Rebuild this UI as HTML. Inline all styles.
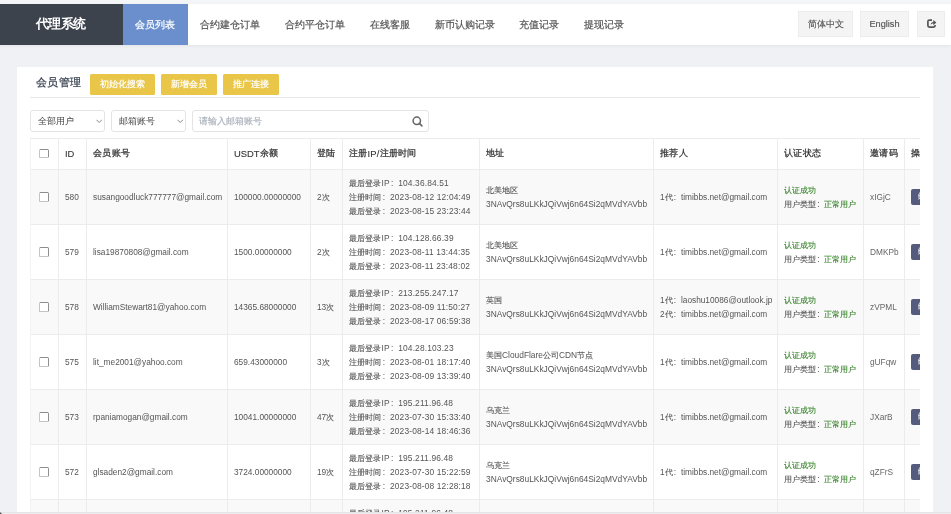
<!DOCTYPE html>
<html><head><meta charset="utf-8">
<style>
*{box-sizing:border-box;margin:0;padding:0}
html,body{width:951px;height:514px;overflow:hidden}
body{will-change:transform;background:#f0f1f5;font-family:"Liberation Sans",sans-serif;color:#555;position:relative}
.strip{position:absolute;left:0;top:0;width:951px;height:5px;background:#f4f5f7}
.nav{position:absolute;left:0;top:4px;width:951px;height:41px;background:#fff;box-shadow:0 1px 3px rgba(0,0,0,0.06)}
.logo{position:absolute;left:0;top:0;width:123px;height:41px;background:#3d434d;color:#fff;font-weight:bold;font-size:12.5px;line-height:41px;padding-left:36px;letter-spacing:-0.6px}
.menu{position:absolute;left:123px;top:0;height:41px;display:flex}
.menu div{height:41px;line-height:41px;padding:0 12.4px;font-size:10px;color:#555;white-space:nowrap;-webkit-text-stroke:0.2px currentColor}
.menu div.on{background:#6a8fcc;color:#fff}
.lb{position:absolute;top:7px;height:25.8px;background:#f4f4f4;border:1px solid #ececec;font-size:8.6px;line-height:24.5px;text-align:center;color:#555;-webkit-text-stroke:0.15px #555}
.card{position:absolute;left:17px;top:67px;width:916px;height:460px;background:#fff}
.title{position:absolute;left:19px;top:8px;font-size:11.3px;color:#3a4352;line-height:14px;letter-spacing:0.3px;-webkit-text-stroke:0.22px #3a4352}
.yb{position:absolute;top:7px;height:20.6px;background:#e9c648;color:#fff;font-size:9.3px;line-height:21.6px;border-radius:1.5px;text-align:center;white-space:nowrap;-webkit-text-stroke:0.2px #fff}
.hline{position:absolute;left:13px;top:30px;width:890px;height:1px;background:#e8e8e8}
.sel{position:absolute;top:43px;height:21.5px;border:1px solid #e4e4e4;border-radius:3px;font-size:9.3px;line-height:20.8px;color:#444;padding-left:7px}
.chev{position:absolute;top:8.3px}
.tw{position:absolute;left:30px;top:138px;width:890px;height:400px;overflow:hidden}
.tb{width:1010px;border-top:1px solid #ececec}
.r{display:flex;height:55px}
.r.h{height:31px}
.c{flex:none;border-right:1px solid #ececec;border-bottom:1px solid #ececec;padding-left:6px;display:flex;align-items:center;white-space:nowrap;overflow:hidden;font-size:8.3px;color:#555}
.c0{border-left:1px solid #ececec;width:29px!important}
.h .c{font-size:9.4px;color:#333;-webkit-text-stroke:0.1px #333}
.r.g .c{background:#f9f9f9}
.cb{display:inline-block;width:9.6px;height:9.4px;border:1px solid #c4c4c4;border-top-color:#8c8c8c;border-right-color:#909090;border-radius:1.5px;background:#fff;margin-left:2.2px}
.ml{line-height:14px}
.gr{color:#37832a}
.op{display:inline-block;width:30px;height:15.5px;background:#555b7c;border-radius:2px;color:#fff;font-size:8px;line-height:15.5px;padding-left:6.5px}
.bot{position:absolute;left:0;top:511.5px;width:951px;height:3px;background:linear-gradient(#e4e4e6 0,#e8e8ea 40%,#f3f3f5 70%)}
.blob{position:absolute;left:-3px;top:512px;width:5px;height:5px;border-radius:50%;background:radial-gradient(#333 30%,rgba(51,51,51,0) 100%)}

.co{display:inline-block;font-style:normal;width:1em;padding-left:0.15em}
.c5{font-size:8.4px;letter-spacing:0.15px}
.c0{border-left-color:#f3f3f3}
.c9{color:#666}
.c6{font-size:8.4px}
.k{text-decoration:none}
.r.h .k{-webkit-text-stroke:0.25px #333;letter-spacing:0.3px}
.h .c{padding-bottom:1px}
.r .k{-webkit-text-stroke:0.12px currentColor}

</style></head><body>
<div class="strip"></div>
<div class="nav">
  <div class="logo">代理系统</div>
  <div class="menu">
    <div class="on">会员列表</div><div>合约建仓订单</div><div>合约平仓订单</div><div>在线客服</div><div>新币认购记录</div><div>充值记录</div><div>提现记录</div>
  </div>
  <div class="lb" style="left:798px;width:55px">简体中文</div>
  <div class="lb" style="left:860px;width:49px;font-size:9.2px">English</div>
  <div class="lb" style="left:916.7px;width:28.3px"><svg style="position:absolute;left:9.1px;top:7.1px" width="10" height="9" viewBox="0 0 10 9"><path d="M5 1.1H2.4Q0.9 1.1 0.9 2.6V6.6Q0.9 8.1 2.4 8.1H6.6Q8.1 8.1 8.1 6.6V5.9" fill="none" stroke="#555" stroke-width="1.7"/><path d="M3.5 5.7Q3.7 3.1 6.3 2.9V0.9L9.4 3.6 6.3 6.2V4.5Q4.7 4.5 3.5 5.7Z" fill="#555"/></svg></div>
</div>
<div class="card">
  <div class="title">会员管理</div>
  <div class="yb" style="left:72.7px;width:65.4px">初始化搜索</div>
  <div class="yb" style="left:144px;width:56px">新增会员</div>
  <div class="yb" style="left:206px;width:56px">推广连接</div>
  <div class="hline"></div>
  <div class="sel" style="left:12.6px;width:75px">全部用户<svg class="chev" style="left:65.5px" width="7" height="5" viewBox="0 0 7 5"><polyline points="0.5,0.8 3.2,3.5 5.9,0.8" fill="none" stroke="#888" stroke-width="1"/></svg></div>
  <div class="sel" style="left:94px;width:74.5px">邮箱账号<svg class="chev" style="left:65px" width="7" height="5" viewBox="0 0 7 5"><polyline points="0.5,0.8 3.2,3.5 5.9,0.8" fill="none" stroke="#888" stroke-width="1"/></svg></div>
  <div class="sel" style="left:175px;width:237px;color:#a9afba;padding-left:6px;-webkit-text-stroke:0.15px #a9afba">请输入邮箱账号
    <svg style="position:absolute;left:219.3px;top:5px" width="12" height="12" viewBox="0 0 12 12"><circle cx="4.8" cy="4.8" r="3.7" fill="none" stroke="#666" stroke-width="1.5"/><line x1="7.4" y1="7.4" x2="9.9" y2="9.9" stroke="#666" stroke-width="1.6" stroke-linecap="round"/></svg>
  </div>
</div>

<div class="tw"><div class="tb">
<div class="r h"><div class="c c0" style="width:28px"><span class="cb"></span></div><div class="c c1" style="width:28px">ID</div><div class="c c2" style="width:141px"><u class="k">会员账号</u></div><div class="c c3" style="width:83px">USDT<u class="k">余额</u></div><div class="c c4" style="width:32px"><u class="k">登陆</u></div><div class="c c5" style="width:137px"><u class="k">注册</u>IP/<u class="k">注册时间</u></div><div class="c c6" style="width:174px"><u class="k">地址</u></div><div class="c c7" style="width:124px"><u class="k">推荐人</u></div><div class="c c8" style="width:86px"><u class="k">认证状态</u></div><div class="c c9" style="width:41px"><u class="k">邀请码</u></div><div class="c c10" style="width:136px"><u class="k">操作</u></div></div>
<div class="r g"><div class="c c0" style="width:28px"><span class="cb"></span></div><div class="c c1" style="width:28px">580</div><div class="c c2" style="width:141px">susangoodluck777777@gmail.com</div><div class="c c3" style="width:83px">100000.00000000</div><div class="c c4" style="width:32px">2<u class="k">次</u></div><div class="c c5" style="width:137px"><div class="ml"><u class="k">最后登录</u>IP<i class="co">:</i>104.36.84.51<br><u class="k">注册时间</u><i class="co">:</i>2023-08-12 12:04:49<br><u class="k">最后登录</u><i class="co">:</i>2023-08-15 23:23:44</div></div><div class="c c6" style="width:174px"><div class="ml"><u class="k">北美地区</u><br>3NAvQrs8uLKkJQiVwj6n64Si2qMVdYAVbb</div></div><div class="c c7" style="width:124px"><div class="ml">1<u class="k">代</u><i class="co">:</i>timibbs.net@gmail.com</div></div><div class="c c8" style="width:86px"><div class="ml"><span class="gr"><u class="k">认证成功</u></span><br><u class="k">用户类型</u><i class="co">:</i><span class="gr"><u class="k">正常用户</u></span></div></div><div class="c c9" style="width:41px">xIGjC</div><div class="c c10" style="width:136px"><span class="op"><u class="k">编辑</u></span></div></div>
<div class="r"><div class="c c0" style="width:28px"><span class="cb"></span></div><div class="c c1" style="width:28px">579</div><div class="c c2" style="width:141px">lisa19870808@gmail.com</div><div class="c c3" style="width:83px">1500.00000000</div><div class="c c4" style="width:32px">2<u class="k">次</u></div><div class="c c5" style="width:137px"><div class="ml"><u class="k">最后登录</u>IP<i class="co">:</i>104.128.66.39<br><u class="k">注册时间</u><i class="co">:</i>2023-08-11 13:44:35<br><u class="k">最后登录</u><i class="co">:</i>2023-08-11 23:48:02</div></div><div class="c c6" style="width:174px"><div class="ml"><u class="k">北美地区</u><br>3NAvQrs8uLKkJQiVwj6n64Si2qMVdYAVbb</div></div><div class="c c7" style="width:124px"><div class="ml">1<u class="k">代</u><i class="co">:</i>timibbs.net@gmail.com</div></div><div class="c c8" style="width:86px"><div class="ml"><span class="gr"><u class="k">认证成功</u></span><br><u class="k">用户类型</u><i class="co">:</i><span class="gr"><u class="k">正常用户</u></span></div></div><div class="c c9" style="width:41px">DMKPb</div><div class="c c10" style="width:136px"><span class="op"><u class="k">编辑</u></span></div></div>
<div class="r g"><div class="c c0" style="width:28px"><span class="cb"></span></div><div class="c c1" style="width:28px">578</div><div class="c c2" style="width:141px">WilliamStewart81@yahoo.com</div><div class="c c3" style="width:83px">14365.68000000</div><div class="c c4" style="width:32px">13<u class="k">次</u></div><div class="c c5" style="width:137px"><div class="ml"><u class="k">最后登录</u>IP<i class="co">:</i>213.255.247.17<br><u class="k">注册时间</u><i class="co">:</i>2023-08-09 11:50:27<br><u class="k">最后登录</u><i class="co">:</i>2023-08-17 06:59:38</div></div><div class="c c6" style="width:174px"><div class="ml"><u class="k">英国</u><br>3NAvQrs8uLKkJQiVwj6n64Si2qMVdYAVbb</div></div><div class="c c7" style="width:124px"><div class="ml">1<u class="k">代</u><i class="co">:</i>laoshu10086@outlook.jp<br>2<u class="k">代</u><i class="co">:</i>timibbs.net@gmail.com</div></div><div class="c c8" style="width:86px"><div class="ml"><span class="gr"><u class="k">认证成功</u></span><br><u class="k">用户类型</u><i class="co">:</i><span class="gr"><u class="k">正常用户</u></span></div></div><div class="c c9" style="width:41px">zVPML</div><div class="c c10" style="width:136px"><span class="op"><u class="k">编辑</u></span></div></div>
<div class="r"><div class="c c0" style="width:28px"><span class="cb"></span></div><div class="c c1" style="width:28px">575</div><div class="c c2" style="width:141px">lit_me2001@yahoo.com</div><div class="c c3" style="width:83px">659.43000000</div><div class="c c4" style="width:32px">3<u class="k">次</u></div><div class="c c5" style="width:137px"><div class="ml"><u class="k">最后登录</u>IP<i class="co">:</i>104.28.103.23<br><u class="k">注册时间</u><i class="co">:</i>2023-08-01 18:17:40<br><u class="k">最后登录</u><i class="co">:</i>2023-08-09 13:39:40</div></div><div class="c c6" style="width:174px"><div class="ml"><u class="k">美国</u>CloudFlare<u class="k">公司</u>CDN<u class="k">节点</u><br>3NAvQrs8uLKkJQiVwj6n64Si2qMVdYAVbb</div></div><div class="c c7" style="width:124px"><div class="ml">1<u class="k">代</u><i class="co">:</i>timibbs.net@gmail.com</div></div><div class="c c8" style="width:86px"><div class="ml"><span class="gr"><u class="k">认证成功</u></span><br><u class="k">用户类型</u><i class="co">:</i><span class="gr"><u class="k">正常用户</u></span></div></div><div class="c c9" style="width:41px">gUFqw</div><div class="c c10" style="width:136px"><span class="op"><u class="k">编辑</u></span></div></div>
<div class="r g"><div class="c c0" style="width:28px"><span class="cb"></span></div><div class="c c1" style="width:28px">573</div><div class="c c2" style="width:141px">rpaniamogan@gmail.com</div><div class="c c3" style="width:83px">10041.00000000</div><div class="c c4" style="width:32px">47<u class="k">次</u></div><div class="c c5" style="width:137px"><div class="ml"><u class="k">最后登录</u>IP<i class="co">:</i>195.211.96.48<br><u class="k">注册时间</u><i class="co">:</i>2023-07-30 15:33:40<br><u class="k">最后登录</u><i class="co">:</i>2023-08-14 18:46:36</div></div><div class="c c6" style="width:174px"><div class="ml"><u class="k">乌克兰</u><br>3NAvQrs8uLKkJQiVwj6n64Si2qMVdYAVbb</div></div><div class="c c7" style="width:124px"><div class="ml">1<u class="k">代</u><i class="co">:</i>timibbs.net@gmail.com</div></div><div class="c c8" style="width:86px"><div class="ml"><span class="gr"><u class="k">认证成功</u></span><br><u class="k">用户类型</u><i class="co">:</i><span class="gr"><u class="k">正常用户</u></span></div></div><div class="c c9" style="width:41px">JXarB</div><div class="c c10" style="width:136px"><span class="op"><u class="k">编辑</u></span></div></div>
<div class="r"><div class="c c0" style="width:28px"><span class="cb"></span></div><div class="c c1" style="width:28px">572</div><div class="c c2" style="width:141px">glsaden2@gmail.com</div><div class="c c3" style="width:83px">3724.00000000</div><div class="c c4" style="width:32px">19<u class="k">次</u></div><div class="c c5" style="width:137px"><div class="ml"><u class="k">最后登录</u>IP<i class="co">:</i>195.211.96.48<br><u class="k">注册时间</u><i class="co">:</i>2023-07-30 15:22:59<br><u class="k">最后登录</u><i class="co">:</i>2023-08-08 12:28:18</div></div><div class="c c6" style="width:174px"><div class="ml"><u class="k">乌克兰</u><br>3NAvQrs8uLKkJQiVwj6n64Si2qMVdYAVbb</div></div><div class="c c7" style="width:124px"><div class="ml">1<u class="k">代</u><i class="co">:</i>timibbs.net@gmail.com</div></div><div class="c c8" style="width:86px"><div class="ml"><span class="gr"><u class="k">认证成功</u></span><br><u class="k">用户类型</u><i class="co">:</i><span class="gr"><u class="k">正常用户</u></span></div></div><div class="c c9" style="width:41px">qZFrS</div><div class="c c10" style="width:136px"><span class="op"><u class="k">编辑</u></span></div></div>
<div class="r g"><div class="c c0" style="width:28px"><span class="cb"></span></div><div class="c c1" style="width:28px">571</div><div class="c c2" style="width:141px">ggsaden3@gmail.com</div><div class="c c3" style="width:83px">5000.00000000</div><div class="c c4" style="width:32px">12<u class="k">次</u></div><div class="c c5" style="width:137px"><div class="ml"><u class="k">最后登录</u>IP<i class="co">:</i>195.211.96.48<br><u class="k">注册时间</u><i class="co">:</i>2023-07-30 15:20:11<br><u class="k">最后登录</u><i class="co">:</i>2023-08-08 12:20:18</div></div><div class="c c6" style="width:174px"><div class="ml"><u class="k">乌克兰</u><br>3NAvQrs8uLKkJQiVwj6n64Si2qMVdYAVbb</div></div><div class="c c7" style="width:124px"><div class="ml">1<u class="k">代</u><i class="co">:</i>timibbs.net@gmail.com</div></div><div class="c c8" style="width:86px"><div class="ml"><span class="gr"><u class="k">认证成功</u></span><br><u class="k">用户类型</u><i class="co">:</i><span class="gr"><u class="k">正常用户</u></span></div></div><div class="c c9" style="width:41px">aBcDe</div><div class="c c10" style="width:136px"><span class="op"><u class="k">编辑</u></span></div></div>
</div></div>
<div class="bot"></div><div class="blob"></div>
</body></html>
